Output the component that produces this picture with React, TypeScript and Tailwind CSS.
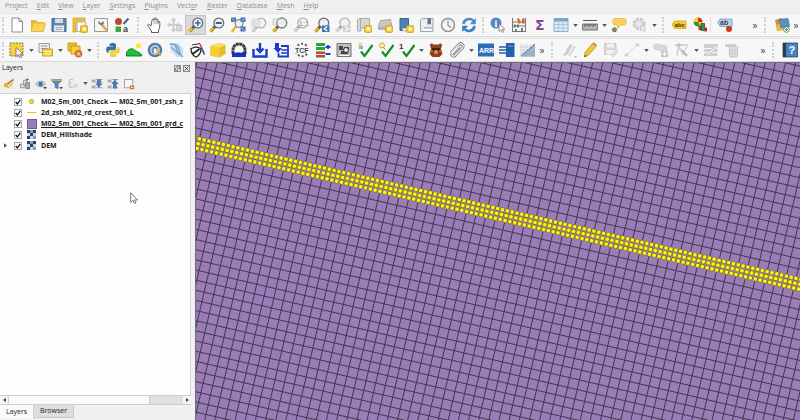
import { ReactNode } from 'react'

const Svg = ({ children, faded = false, size = 'size-4' }: { children: ReactNode; faded?: boolean; size?: string }) => (
  <svg viewBox="0 0 16 16" className={`${size} shrink-0 ${faded ? 'opacity-50 grayscale' : ''}`} fill="none" aria-hidden="true">
    {children}
  </svg>
)

const Lens = ({ children, faded = false }: { children?: ReactNode; faded?: boolean }) => (
  <Svg faded={faded}>
    <path d="M6 9.5 1.5 14.5" stroke="#5b5335" strokeWidth="3" />
    <path d="M4.5 11 1.2 14.6" stroke="#f0c419" strokeWidth="2.2" />
    <circle cx="9.8" cy="6" r="4.9" fill="#eef1f2" stroke="#6c7276" strokeWidth="1.3" />
    {children}
  </Svg>
)

const Star = () => (
  <g>
    <rect x="8.5" y="8.5" width="7.3" height="7" rx="1.5" fill="#f1cb3a" stroke="#c9981a" strokeWidth=".7" />
    <circle cx="12.2" cy="12" r="1.8" fill="#fff8d8" />
  </g>
)

const Check = () => <path d="M4 9.5 7.5 14 15.5 3" stroke="#15902a" strokeWidth="2.2" />

const icons: Record<string, ReactNode> = {
  newProject: <Svg><path d="M3 1h7l3.5 3.5V15H3z" fill="#fff" stroke="#8b8b8b" /><path d="M10 1v3.5h3.5" stroke="#8b8b8b" /></Svg>,
  open: <Svg><path d="M1 3h5l1.5 2H13v9H1z" fill="#e5b92e" /><path d="M3 6h12.5l-2 8.5H1z" fill="#f8d457" stroke="#d8aa25" strokeWidth=".7" /></Svg>,
  save: <Svg><path d="M1 1.5h14v13H1z" fill="#5d87b4" stroke="#45698f" /><path d="M4 1.5h8V6H4z" fill="#d7dde3" /><path d="M3 8.5h10v6H3z" fill="#eceef0" /><path d="M4.5 10.5h7M4.5 12.5h7" stroke="#9ba6b1" /></Svg>,
  newLayout: <Svg><path d="M1 1h12v3H4v11H1z" fill="#f4c62d" stroke="#c79a1d" strokeWidth=".7" /><path d="M5 5h8.5v9.5H5z" fill="#fff" stroke="#9c9c9c" strokeWidth=".8" /><Star /></Svg>,
  layoutManager: <Svg><path d="M1.500 1.500h13v13h-13z" fill="#f5f5f5" stroke="#9a9a9a" /><path d="m8.500 7.500 6 6.500" stroke="#d7a935" strokeWidth="2.400" /><path d="M5 4c0 2.500 1.500 4.500 4 4s2-2.500 1-4L8.500 6 7 5.500z" fill="#777" /></Svg>,
  style: (
    <Svg>
      <circle cx="4.500" cy="4.500" r="3.500" fill="#b94a2c" />
      <path d="m9.500 7 5-5.500" stroke="#42658e" strokeWidth="2" />
      <path d="M1.500 9.500h5.500V15H1.500z" fill="#47a04c" />
      <text x="9" y="15" className="fill-[#444] font-['Liberation_Sans'] text-[9px] font-bold">a</text>
    </Svg>
  ),
  hand: <Svg><path d="M5 9 3.300 7.500C2 6.500 1.200 8 2.200 9.200L5.500 14v1.500h7V13c1.200-2 1.500-4 1.300-7.500 0-1.500-1.800-1.500-1.800 0V3.200c0-1.500-1.900-1.500-1.900 0V2c0-1.600-2-1.600-2 0v1.200c0-1.500-2-1.500-2 0z" fill="#fff" stroke="#4d4d4d" strokeWidth=".9" /><path d="M8.100 3.500V7m2-3.500V7m1.900-2v2.500" stroke="#777" strokeWidth=".7" /></Svg>,
  panSelection: <Svg faded><path d="M6.500.500 9.500 4h-2v3h3V5l3.500 3-3.500 3V9h-3v3h2l-3 3.500-3-3.500h2V9h-3v2L0 8l3-3v2h2.500V4h-2z" fill="#a5a5a5" /><path d="M9.500 8.500H15V14H9.500z" fill="#bbb" stroke="#888" strokeWidth=".7" /></Svg>,
  zoomIn: <Lens><path d="M7 6h5.600M9.800 3.200v5.600" stroke="#3470ae" strokeWidth="1.700" /></Lens>,
  zoomOut: <Lens><path d="M6.800 6h6" stroke="#355f8f" strokeWidth="2" /></Lens>,
  zoomFull: (
    <Svg>
      <path d="M6 9.500 1.800 15" stroke="#e6bb20" strokeWidth="2.500" />
      <circle cx="9" cy="6.500" r="4" fill="#eef1f2" stroke="#6c7276" />
      <path d="M1 .500h5v4.500H1zM10.500.500h5v4.500h-5zM10.500 9.500h5v5h-5z" fill="#4677b1" />
      <path d="m2 1.500 3 3M14.500 1.500l-3 3m3 9-3-3" stroke="#c9daf0" strokeWidth=".8" />
    </Svg>
  ),
  zoomSelection: <Lens faded><path d="M1 2h8v8H1z" fill="#ccc" stroke="#aaa" strokeWidth=".6" /></Lens>,
  zoomLayer: <Lens><path d="M1 2h6v6H1z" fill="#e8e8e8" stroke="#b4b4b4" strokeWidth=".6" /><circle cx="9.800" cy="6" r="4.900" fill="#ededed" stroke="#6c7276" /></Lens>,
  zoomNative: <Lens faded><text x="6" y="8.500" className="fill-[#555] font-['Liberation_Sans'] text-[7px] font-bold">1:1</text></Lens>,
  zoomLast: <Lens><path d="M8 8.500h7.500v6.500H8z" fill="#3a77b7" /><path d="m13.300 9.500-3 2.200 3 2.300" stroke="#fff" strokeWidth="1.300" /></Lens>,
  zoomNext: <Lens faded><path d="M8 8.500h7.500v6.500H8z" fill="#aaa" /><path d="m10.300 9.500 3 2.200-3 2.300" stroke="#fff" strokeWidth="1.300" /></Lens>,
  mapView: <Svg><path d="M3 1.500h10.500V11H5v3H1.500V3z" fill="#d8d8d8" stroke="#aaa" /><path d="M4.500 2v9" stroke="#aaa" /><Star /></Svg>,
  view3d: <Svg><path d="m3.500 3.500 10-1 1.500 8H1z" fill="#c9c9c9" stroke="#aaa" /><path d="M1 10.500h10v2.500H1z" fill="#b7b7b7" /><Star /></Svg>,
  newBookmark: <Svg><path d="M2 1.500h8.500V11H4.500v2.500H2z" fill="#4f80b4" stroke="#3c658f" /><path d="M4.500 11h7v3h-7z" fill="#e9e9e9" stroke="#8d8d8d" strokeWidth=".6" /><Star /></Svg>,
  bookmarks: <Svg><path d="M3.500 1.500h10.500v9.500H5v3.500H1.500V3z" fill="#eceded" stroke="#a1a4a8" /><path d="M5 11h9v3.500H3" stroke="#a1a4a8" fill="#f7f7f7" /><path d="M8.500 1.500h3.500v6.500l-1.700-1.500L8.500 8z" fill="#60738a" /></Svg>,
  clock: <Svg><circle cx="8" cy="8" r="6.500" fill="#f3f3f3" stroke="#959595" strokeWidth="1.500" /><path d="M8 3.500V8.500l3 2" stroke="#888" strokeWidth="1.100" /></Svg>,
  refresh: <Svg><path d="M2.500 7c.500-5 7-6.500 10-3" stroke="#4d8dcb" strokeWidth="2.600" /><path d="M14.800 1v6.200H8.700z" fill="#4d8dcb" /><path d="M13.500 9c-.500 5-7 6.500-10 3" stroke="#3c7dbe" strokeWidth="2.600" /><path d="M1.200 15V8.800h6.100z" fill="#3c7dbe" /></Svg>,
  identify: (
    <Svg>
      <circle cx="6" cy="6" r="5.500" fill="#5387bd" />
      <text x="4.500" y="9.500" className="fill-white font-['Liberation_Serif'] text-[10px] font-bold">i</text>
      <path d="M9 7v7.500l1.900-1.700 1.500 2.700 1.200-.700-1.400-2.500h2.600z" fill="#fff" stroke="#777" strokeWidth=".8" />
    </Svg>
  ),
  abacus: <Svg><path d="M1.500 1v14M14.500 1v14M1.500 5h13M1.500 9h13M1.500 14.500h13" stroke="#777" /><path d="M7 3.500h2.500v3H7zM11 3.500h2.500v3H11zM6 1.500h2.500v2H6zM11 1.500h2.500v2H11z" fill="#d4652c" /><path d="M3 7.500h2v3H3zM6 7.500h2v3H6zM4 12h2v2H4zM10 11h2v3h-2z" fill="#777" /></Svg>,
  sum: <Svg><text x="3" y="13" className="fill-[#80459b] font-['DejaVu_Sans'] text-[14px] font-bold">Σ</text></Svg>,
  table: <Svg><path d="M1 1.500h14v13H1z" fill="#dfeaf5" stroke="#8fb0d0" /><path d="M1 1.500h14v3H1z" fill="#6f9fcf" /><path d="M5.500 2v12M10 2v12M1 7.500h14M1 11h14" stroke="#9cbcd9" strokeWidth=".8" /></Svg>,
  ruler: <Svg><path d="M1 3.500h14" stroke="#555" /><path d="M.500 7h15v6H.500z" fill="#b5b5b5" stroke="#777" /><path d="M3 7v3m2-3v2m2-2v3m2-3v2m2-2v3m2-3v2" stroke="#444" strokeWidth=".8" /></Svg>,
  tip: <Svg><path d="M4 1.500h9c1.500 0 2 1 2 2V6c0 1.500-1 2-2 2H9.500l-3 3.500L6.700 8H4C2.500 8 2 7 2 6V3.500c0-1.500 1-2 2-2z" fill="#fbd760" stroke="#dfb236" strokeWidth=".8" /><path d="M4 4h9M4 6h7" stroke="#e4bc46" strokeWidth=".7" strokeDasharray="2 1" /><circle cx="3.500" cy="12.800" r="2" fill="#7e9377" stroke="#66725f" /></Svg>,
  gear: <Svg faded><circle cx="7" cy="7" r="5" stroke="#9d9d9d" strokeWidth="3" strokeDasharray="3 1" /><circle cx="7" cy="7" r="3.500" fill="#ddd" stroke="#aaa" /><path d="M9 8v6l1.700-1.500 1.800 2.500 1-1-1.500-2H14z" fill="#eee" stroke="#888" strokeWidth=".7" /></Svg>,
  label: (
    <Svg>
      <path d="M1 7.500 3.500 4H15v7.500H3.500z" fill="#f7cb2d" stroke="#cfa01b" strokeWidth=".7" />
      <text x="3.500" y="10" className="fill-[#3b3410] font-['Liberation_Sans'] text-[6px] font-bold">abc</text>
    </Svg>
  ),
  diagram: <Svg><circle cx="6" cy="5" r="4.500" fill="#f5cf2e" /><path d="M1.500 5A4.500 4.500 0 0 0 8 9L6 5z" fill="#23993a" /><path d="M6 .500A4.500 4.500 0 0 1 10.500 5H6z" fill="#cf3426" /><path d="M6.500 9H10v4H6.500z" fill="#cf3426" /><path d="M9 6.500h3.500v7H9z" fill="#2b9b3e" stroke="#1d1d1d" strokeWidth=".6" /><path d="M12.500 10.500h2.500v4h-2.500z" fill="#c2271d" /></Svg>,
  pinLabel: (
    <Svg>
      <path d="M1 5.500 3 2h12v7.500H3z" fill="#b8d2ee" stroke="#6c9bcb" strokeWidth=".8" />
      <text x="3" y="8.300" className="fill-[#444] font-['Liberation_Sans'] text-[7px] font-bold">ab</text>
      <circle cx="12" cy="12" r="3" fill="#c5391f" />
    </Svg>
  ),
  dataSource: <Svg><path d="m1 3 7-2 3 9-8 2z" fill="#d98a32" /><path d="m2 8 7-3 3 8-9 1z" fill="#e0bd37" /><path d="m5 2.500 9-1 1.500 8-8.500 1z" fill="#5b8ecb" stroke="#456f9f" strokeWidth=".7" /><circle cx="12.500" cy="12.500" r="2.800" fill="#fff" stroke="#4a9566" /><path d="M12.500 11v3M11 12.500h3" stroke="#4a9566" /></Svg>,

  select: <Svg><path d="M1 1h13v13H1z" fill="#f7d23a" stroke="#777" strokeDasharray="2 1" /><path d="M7 5.500v9l2.300-2 1.800 3.500 1.500-.800-1.700-3.200 3.100-.300z" fill="#fff" stroke="#777" strokeWidth=".9" /></Svg>,
  form: <Svg><path d="M1 1.500h10.500v9H1z" fill="#eee" stroke="#999" /><path d="M3 4h6.500M3 6.500h6.500" stroke="#999" /><path d="M4.500 7h10v7h-10z" fill="#f7d23a" stroke="#b7962b" strokeWidth=".8" /><path d="M6.500 9.500h6.500M6.500 12h6.500" stroke="#fff6cb" /></Svg>,
  deselect: <Svg><path d="M1 1h8.500v8H1z" fill="#f3bf26" stroke="#b98c20" strokeWidth=".8" /><path d="M4 4h9v8H4z" fill="#f7d23a" stroke="#b98c20" strokeWidth=".8" /><circle cx="11.500" cy="11.800" r="3.800" fill="#ce6b33" /><path d="m9.800 10.200 3.400 3.400m0-3.400-3.400 3.400" stroke="#fff" /></Svg>,
  python: <Svg><path d="M4.500 4V2.500C4.500.500 11 .500 11 2.500V6c0 2-1 2-2.500 2H5.500C4 8 3.500 9 3.500 11 .500 11 .500 4.500 3 4.500h5V4z" fill="#3974a8" /><path d="M11.500 12v1.500c0 2-6.500 2-6.500 0V10c0-2 1-2 2.500-2h3C12 8 12.500 7 12.500 5c3 0 3 6.500.500 6.500H8V12z" fill="#f4cd3d" /></Svg>,
  tuflow: <Svg><path d="M.500 14V10.500C2 7 6 5.500 8.500 8c2 2 4.500 1.500 7 4.500V14z" fill="#16c52f" stroke="#145d20" strokeWidth=".8" /><path d="m12.500 0 .700 2.200L15.500 2l-1.200 2 1.200 2-2.300-.500-.700 1.500-.700-1.500-2.300.500 1.200-2-1.200-2 2.300.200z" fill="#ffe21f" /></Svg>,
  swirl: <Svg><circle cx="8" cy="8" r="6" stroke="#547da5" strokeWidth="2.600" /><circle cx="8" cy="8" r="3.500" stroke="#8eb0cc" /><path d="M6 11V7c0-2 4-2 4 0" stroke="#547da5" strokeWidth="1.500" /><path d="m9 7 5 7" stroke="#e3ad2f" strokeWidth="1.700" /></Svg>,
  crayfish: <Svg><path d="M1 1h9l5 5v9h-6L3 9z" fill="#cbdff1" /><path d="M2 2c4 0 8 1 9 5s0 6 4 8M3 5l9 8M7 3l4 10" stroke="#77a5cf" strokeWidth="1.300" /></Svg>,
  shield: <Svg><path d="M2 6.500 7 5l5 1.500c0 4-1.500 7-5 8.500-3.500-1.500-5-4.500-5-8.500z" fill="#fff" stroke="#222" strokeWidth="1.300" /><path d="m3.500 12 7-5" stroke="#222" strokeWidth="1.800" /><path d="m3 3 8-1.500" stroke="#333" /><path d="m11 2 4 9" stroke="#c24032" strokeWidth="1.500" /><path d="m12.500 6 3 7" stroke="#2c67a3" strokeWidth="1.300" /></Svg>,
  box: <Svg><path d="m.500 4 9-3 6 2v9l-6 3.500-9-2z" fill="#e8bd23" /><path d="m.500 4 9 1.700V15.500l-9-2z" fill="#f5cd37" /><path d="m.500 4 9-3 6 2-6 2.700z" fill="#f9dd68" /></Svg>,
  arch: <Svg><path d="M2 12V8c0-8 12-8 12 0v4" stroke="#3d4042" strokeWidth="3" strokeDasharray="3 .400" /><path d="M1 10.500c2-1 3 1 5 0s3 1 5 0 3 0 4 0V15H1z" fill="#1531bd" /></Svg>,
  download: <Svg><path d="M1.500 7v7.500h13V7" stroke="#1b3bcb" strokeWidth="2.400" /><path d="M8 1v8M4.500 6.500 8 10l3.500-3.500" stroke="#1b3bcb" strokeWidth="2.400" /></Svg>,
  importTo: <Svg><path d="M2 1h4v5h3L5 11 .500 6H2z" fill="#1b3bcb" /><path d="M8 4h7v10.500H5.500V11" stroke="#1b3bcb" strokeWidth="1.800" /><path d="M8.500 8h6M8 11h6" stroke="#1b3bcb" strokeWidth="1.500" /></Svg>,
  tcf: (
    <Svg>
      <circle cx="8" cy="8" r="6.300" stroke="#555e68" strokeWidth="2" strokeDasharray="2 2" />
      <path d="M0 5h16v6H0z" fill="#f6f6f6" />
      <text x="1" y="10.500" className="fill-[#3c4652] font-['Liberation_Sans'] text-[7px] font-bold">TCF</text>
    </Svg>
  ),
  bars: <Svg><path d="M1 1h9v3H1zM1 5h9v3H1z" fill="#27a53d" /><path d="M1 9.500h9v2.500H1zM1 13h9v2.500H1z" fill="#b54b35" /><path d="M10.500 5h5m-2.500-2v4M10.500 12h5" stroke="#263fc4" strokeWidth="1.800" /></Svg>,
  machine: <Svg><path d="M1 1.500h14v13H1z" fill="#bdbdbd" stroke="#777" /><path d="M3 4h4v4H3zM8 5h5v2H8zM5 9h7v3H5z" fill="#444" /><circle cx="10" cy="8" r="2.500" fill="#e6e6e6" stroke="#333" /><path d="M3 13.500h10" stroke="#fff" /></Svg>,
  checkPage: <Svg><path d="M1.500 1H5v4.500H1.500z" fill="#f3d36a" /><path d="M2 4h4v3H2z" fill="#87aede" /><Check /></Svg>,
  checkLens: <Svg><circle cx="4" cy="3.500" r="2.500" fill="#fbeebb" stroke="#d1a42c" /><path d="m5.500 5.500 2 2" stroke="#8b8b8b" /><Check /></Svg>,
  checkOne: (
    <Svg>
      <text x="0" y="6.500" className="fill-[#333] font-['Liberation_Sans'] text-[8px] font-bold">1</text>
      <Check />
    </Svg>
  ),
  bear: <Svg><path d="M2 3c0-2 3-2 3-.500h6C11 1 14 1 14 3l-1 4 1.500 5-3 3h-7l-3-3L3 7z" fill="#8c4420" /><path d="M4 6h8v3H4z" fill="#42200f" /><circle cx="8" cy="10" r="2" fill="#dd9a55" /><path d="M2 9h3M11 9h3" stroke="#cf6e2f" strokeWidth="1.500" /></Svg>,
  clip: <Svg><path d="m2 11 8-8.500c2-2 5.500.500 3.500 3L6 13.500c-2 1.500-4-.500-3-2L10 5" stroke="#7c7c7c" strokeWidth="3" /><path d="m2 11 8-8.500c2-2 5.500.500 3.500 3L6 13.500c-2 1.500-4-.500-3-2L10 5" stroke="#efefef" strokeWidth="1.300" /></Svg>,
  arr: (
    <Svg>
      <path d="M0 1.500h16v13H0z" fill="#2c6db9" />
      <text x="1" y="11" className="fill-white font-['Liberation_Sans'] text-[7px] font-bold">ARR</text>
    </Svg>
  ),
  flow: <Svg><path d="M7 1h8.500v14H7z" fill="#255fae" /><path d="M0 5h8M0 8h8M0 11h8" stroke="#255fae" strokeWidth="1.600" /><path d="M9 4h5" stroke="#7ca8de" /></Svg>,
  chart: <Svg><path d="M1 1.500h14v13H1z" fill="#f4f7fa" /><path d="M1 14.500 15 2v12.500z" fill="#93afcb" /><path d="M1 1.500v13h14M4 2v12m3-12v12m3-12v12m3-12v12M1 5h14M1 8h14M1 11h14" stroke="#aebccb" strokeWidth=".6" /><path d="M1 14 15 2" stroke="#51718f" /></Svg>,

  edits: <Svg faded><path d="m3 12 6-10 3 1-6 10-4 1z" fill="#a4a4a4" /><path d="m7 13 6-9 2 1-6 9z" fill="#b8b8b8" /><path d="M13 14h3l-1.500 2z" fill="#777" /></Svg>,
  pencil: <Svg><path d="m3 10.500 7.500-9 3.500 3L6.500 13 2.500 15z" fill="#f4c630" stroke="#b48b1f" strokeWidth=".8" /><path d="m10.500 1.500 1.500-1 3 2.500-1 1.500z" fill="#db7e5c" /><path d="m2.500 15 .500-2 1.500 1z" fill="#333" /></Svg>,
  saveEdits: <Svg faded><path d="M1.500 1.500h11.500v11H1.500z" fill="#bbb" stroke="#999" /><path d="M4 1.500h7v4H4zM3.500 8h8v4.500h-8z" fill="#eee" /><path d="m8 13 5-6 2 2-5 6z" fill="#ccc" stroke="#999" strokeWidth=".6" /></Svg>,
  line: <Svg faded><path d="M2.500 13 13 3" stroke="#bbb" /><circle cx="2.500" cy="13" r="1.800" fill="#aaa" /><circle cx="13.500" cy="3" r="1.800" fill="#aaa" /></Svg>,
  addPolygon: <Svg faded><path d="M1 5c0-4 5-3 6-2s8-1 7 3-5 3-7 2-6 1-6-3z" fill="#bbb" stroke="#999" /><path d="M8 8.500h7V15H8z" fill="#999" /><path d="M11.500 9.500v4.500M9.200 11.800h4.600" stroke="#fff" strokeWidth="1.200" /></Svg>,
  vertex: <Svg faded><path d="M1 3h13M5 3 3 14M3 4l10 9M13 5l-5 8" stroke="#999" strokeWidth="1.300" /><path d="M3.500 1.500h3v3h-3z" fill="#888" /><path d="m7 8 6 6" stroke="#777" strokeWidth="2" /></Svg>,
  multiEdit: <Svg faded><path d="M1 2h13.500v4H1zM1 7h13.500v3H1zM1 11h13.500v3H1z" fill="#a9a9a9" /><path d="m3 13 10-10 2 1.500L5 14z" fill="#ddd" stroke="#888" strokeWidth=".7" /></Svg>,
  trash: <Svg faded><path d="M1 2h11v3H1z" fill="#aaa" /><path d="M4 5h11M5 7h9l-1 8H6z" fill="#c5c5c5" stroke="#8e8e8e" /><path d="M8 8.500V13m3-4.500V13" stroke="#8e8e8e" /></Svg>,
  help: (
    <Svg>
      <path d="M1 1h14.500v14H1z" fill="#4783c4" stroke="#2d4867" strokeWidth=".8" />
      <path d="M1 1h3v14H1z" fill="#2b3b4e" />
      <text x="6.500" y="12" className="fill-white font-['Liberation_Sans'] text-[11px] font-bold">?</text>
    </Svg>
  ),
}

const Grip = ({ className }: { className: string }) => (
  <div className={`flex shrink-0 justify-center ${className}`}>
    <div className="h-4 border-l-2 border-dotted border-[#d2d2d2]" />
  </div>
)

const Tool = ({ name, active = false }: { name: string; active?: boolean }) => (
  <button
    aria-label={name}
    className={`flex h-5 w-[21px] shrink-0 items-center justify-center ${active ? 'border border-[#c2c2c2] bg-[#d9d9d9]' : ''}`}
  >
    {icons[name]}
  </button>
)

const Tools = ({ names }: { names: string[] }) => (
  <>
    {names.map((name) => (
      <Tool key={name} name={name} active={name === 'zoomIn'} />
    ))}
  </>
)

const Arrow = () => (
  <button aria-label="More options" className="flex h-5 w-2 shrink-0 items-center justify-center">
    <svg viewBox="0 0 6 4" className="h-[3px] w-[5px]"><path d="M0 0h6L3 4z" fill="#555" /></svg>
  </button>
)

const More = () => (
  <button aria-label="Show more" className="flex h-5 w-2 shrink-0 items-center justify-center text-[10px] text-[#444]">»</button>
)

const menus = [
  ['Pro', 'j', 'ect'],
  ['', 'E', 'dit'],
  ['', 'V', 'iew'],
  ['', 'L', 'ayer'],
  ['', 'S', 'ettings'],
  ['', 'P', 'lugins'],
  ['Vect', 'o', 'r'],
  ['', 'R', 'aster'],
  ['', 'D', 'atabase'],
  ['', 'M', 'esh'],
  ['', 'H', 'elp'],
]

const Raster = () => (
  <svg viewBox="0 0 9 9" className="size-[9px]">
    <path d="M0 0h9v9H0z" fill="#c6d5e6" />
    <path d="M0 0h3v3H0zM6 0h3v3H6zM3 3h3v3H3zM0 6h3v3H0z" fill="#2e4262" />
    <path d="M3 0h3v3H3zM6 6h3v3H6z" fill="#7f9cc0" />
  </svg>
)

const layers = [
  { name: 'M02_5m_001_Check — M02_5m_001_zsh_z', symbol: <div className="size-[5px] rounded-full border border-[#b5a22c] bg-[#ffe619]" /> },
  { name: '2d_zsh_M02_rd_crest_001_L', symbol: <div className="h-px w-[9px] bg-[#eab92f]" /> },
  { name: 'M02_5m_001_Check — M02_5m_001_grd_c', symbol: <div className="size-[10px] border border-[#77598f] bg-[#987db7]" />, current: true },
  { name: 'DEM_Hillshade', symbol: <Raster /> },
  { name: 'DEM', symbol: <Raster />, expandable: true },
]

const panelIcons: Record<string, ReactNode> = {
  styling: <Svg size="size-3"><path d="M2 7c3-1 5 0 5 2s-3 5-6 2z" fill="#e6a432" /><path d="m6 8 8-6" stroke="#cf7a35" strokeWidth="2.500" /><path d="m2 8 5 5 6-6" stroke="#efb13b" strokeWidth="2" /></Svg>,
  group: <Svg size="size-3"><path d="M2 13V8h5v5zM6 9V3h4v6z" fill="#ddd" stroke="#888" /><path d="M9 6h5v8H9z" fill="#aaa" stroke="#777" /><path d="M11 0v4M9 2h4" stroke="#555" /></Svg>,
  themes: <Svg size="size-3"><path d="M1 8c3-5 10-5 13 0-3 5-10 5-13 0z" fill="#d5d9dd" stroke="#818a94" /><circle cx="7.500" cy="8" r="3" fill="#48749f" /><path d="M11 12h5l-2.500 3z" fill="#444" /></Svg>,
  filter: <Svg size="size-3"><path d="M1 2h13v2L9.500 8v6l-4-1V8L1 4z" fill="#4f8bc4" stroke="#3a6a99" strokeWidth=".8" /><path d="M1 2h13v2H1z" fill="#e0b13b" /><path d="M11 12h5l-2.500 3z" fill="#444" /></Svg>,
  expression: <Svg size="size-3" faded><path d="M8 2C1 1 2 7 6 7 0 7 1 14 8 12" stroke="#999" strokeWidth="1.800" /><path d="M9 8h5v5H9z" fill="#bbb" /></Svg>,
  expand: <Svg size="size-3"><path d="M1 2h5v4H1zM1 10h5v4H1z" fill="#aaa" /><path d="M7 2h8M7 5h8M7 13h8" stroke="#999" strokeWidth="1.500" /><path d="M8 2h5v5h2.500l-5 6-5-6H8z" fill="#4c7eb3" /></Svg>,
  collapse: <Svg size="size-3"><path d="M1 2h5v4H1zM1 10h5v4H1z" fill="#aaa" /><path d="M7 2h8M7 13h8" stroke="#999" strokeWidth="1.500" /><path d="M8 14h5V8h2.500l-5-6-5 6H8z" fill="#4c7eb3" /></Svg>,
  remove: <Svg size="size-3"><path d="M2 2h11v11H2z" fill="#f6f6f6" stroke="#888" /><path d="M9 10h6v5H9z" fill="#dc6c50" /><path d="M10.500 12.500h3" stroke="#fff" strokeWidth="1.200" /></Svg>,
}

const PanelTool = ({ name }: { name: string }) => (
  <button aria-label={name} className="flex h-4 w-4 items-center justify-center">{panelIcons[name]}</button>
)

const LayersPanel = () => (
  <aside className="flex w-[195px] shrink-0 flex-col pr-1">
    <div className="flex h-3 items-center justify-between pl-[2px] pr-px pt-px">
      <h2 className="text-[7px] text-[#222]">Layers</h2>
      <div className="flex gap-[2px]">
        <button aria-label="Float panel" className="size-[7px] border border-[#8a8a8a]">
          <svg viewBox="0 0 5 5" className="size-[5px]"><path d="M2 .500h2.500V3H2zM.500 2v2.500H3" stroke="#555" strokeWidth=".7" fill="none" /></svg>
        </button>
        <button aria-label="Close panel" className="size-[7px] border border-[#8a8a8a]">
          <svg viewBox="0 0 5 5" className="size-[5px]"><path d="m.500.500 4 4m0-4-4 4" stroke="#333" strokeWidth=".9" /></svg>
        </button>
      </div>
    </div>
    <div className="flex h-[19px] items-center pl-px">
      {['styling', 'group', 'themes', 'filter', 'expression'].map((name) => <PanelTool key={name} name={name} />)}
      <Arrow />
      {['expand', 'collapse', 'remove'].map((name) => <PanelTool key={name} name={name} />)}
    </div>
    <ul className="min-h-0 flex-1 overflow-hidden border-r border-t border-[#d0d0d0] bg-[#fdfdfd] pt-[2px]">
      {layers.map(({ name, symbol, current, expandable }) => (
        <li key={name} className="flex h-[11px] items-center">
          <div className="flex w-[14px] shrink-0 pl-1">
            {expandable && (
              <button aria-label={`Expand ${name}`}>
                <svg viewBox="0 0 4 6" className="h-[5px] w-[3px]"><path d="M0 0 4 3 0 6z" fill="#555" /></svg>
              </button>
            )}
          </div>
          <label className="flex items-center whitespace-nowrap text-[7px] font-bold leading-[10px] text-[#1a1a1a]">
            <span className="grid size-2 shrink-0">
              <input type="checkbox" defaultChecked className="peer col-start-1 row-start-1 size-2 appearance-none border border-[#a8a8a8] bg-white" />
              <svg viewBox="0 0 8 8" className="pointer-events-none invisible col-start-1 row-start-1 size-2 peer-checked:visible">
                <path d="M1.700 4 3.400 6 6.300 1.800" stroke="#111" strokeWidth="1.300" fill="none" />
              </svg>
            </span>
            <span className="flex w-[19px] shrink-0 justify-center">{symbol}</span>
            <span className={current ? 'underline' : ''}>{name}</span>
          </label>
        </li>
      ))}
    </ul>
    <div className="flex h-[10px] shrink-0 border-y border-[#cfcfcf] bg-[#dbe1e6]">
      <button aria-label="Scroll left" className="flex w-2 items-center justify-center bg-[#f6f6f6]">
        <svg viewBox="0 0 3 4" className="h-1 w-[3px]"><path d="M3 0v4L0 2z" fill="#444" /></svg>
      </button>
      <div className="w-[142px] border-x border-[#cfcfcf] bg-[#fafafa]" />
      <div className="flex-1" />
      <button aria-label="Scroll right" className="flex w-2 items-center justify-center bg-[#f6f6f6]">
        <svg viewBox="0 0 3 4" className="h-1 w-[3px]"><path d="M0 0v4L3 2z" fill="#444" /></svg>
      </button>
    </div>
    <div role="tablist" className="flex h-[15px] shrink-0 items-start text-[7px] text-[#222]">
      <button role="tab" aria-selected="true" className="h-[14px] w-[34px] border-r border-[#cfcfcf] bg-[#fafafa]">Layers</button>
      <button role="tab" aria-selected="false" className="h-[13px] w-10 border-b border-r border-[#cbcbcb] bg-[#dedede]">Browser</button>
    </div>
  </aside>
)

// The model grid is rotated: one cell along a row moves by (CELL_X, CELL_Y).
const CELL_X = 9.623
const CELL_Y = 2.25
const ORIGIN = { x: 3, y: 207.7 }
const SLOPE = CELL_Y / CELL_X
const SPACING = CELL_X + CELL_Y * SLOPE
const EXTENT = 2400

const gridPath = () => {
  const parts: string[] = []
  for (let n = 0; n < 320; n++) {
    const y = ORIGIN.y + (n - 80) * SPACING - ORIGIN.x * SLOPE
    parts.push(`M0 ${y.toFixed(2)}L${EXTENT} ${(y + EXTENT * SLOPE).toFixed(2)}`)
    const x = ORIGIN.x + (n - 5) * SPACING + ORIGIN.y * SLOPE
    parts.push(`M${x.toFixed(2)} 0L${(x - EXTENT * SLOPE).toFixed(2)} ${EXTENT}`)
  }
  return parts.join('')
}

// Z points sit on every half cell. The crest runs along the middle one of three rows.
const CREST_ROW = -25

const pointAt = (i: number, j: number) => ({
  x: ORIGIN.x + (i * CELL_X - j * CELL_Y) / 2,
  y: ORIGIN.y + (i * CELL_Y + j * CELL_X) / 2,
})

const zPoints = [CREST_ROW - 1, CREST_ROW, CREST_ROW + 1].flatMap((row) =>
  Array.from({ length: 500 }, (_, i) => pointAt(i - 10, row)),
)

const crestStart = pointAt(-10, CREST_ROW)
const crestEnd = pointAt(490, CREST_ROW)

const MapCanvas = () => (
  <main className="min-w-0 flex-1 overflow-hidden border-l border-t border-[#77677f] bg-[#987db7]">
    <svg className="h-full w-full" role="img" aria-label="Model grid with crest line points">
      <path d={gridPath()} stroke="#45364f" strokeWidth="1" fill="none" />
      <path d={`M${crestStart.x} ${crestStart.y}L${crestEnd.x} ${crestEnd.y}`} stroke="#c98a1c" strokeWidth="1.500" />
      {zPoints.map(({ x, y }) => (
        <circle key={`${x}-${y}`} cx={x} cy={y} r="2.200" fill="#fff714" stroke="#5d5018" strokeWidth=".5" />
      ))}
    </svg>
  </main>
)

const App = () => (
  <div className="relative flex h-screen flex-col overflow-hidden bg-[#f0f0f0] font-['Open_Sans','Noto_Sans',sans-serif]">
    <nav className="flex h-[13px] shrink-0 items-center gap-[9px] pl-[5px] text-[7px] text-[#8e8e8e]">
      {menus.map(([before, key, after]) => (
        <button key={before + key + after}>{before}<u>{key}</u>{after}</button>
      ))}
    </nav>

    <div role="toolbar" className="flex h-6 shrink-0 items-center border-y border-[#dadada] border-t-[#e6e6e6] bg-[#f7f7f7]">
      <Grip className="w-[6px]" />
      <Tools names={['newProject', 'open', 'save', 'newLayout', 'layoutManager', 'style']} />
      <Grip className="w-[11px]" />
      <Tools names={['hand', 'panSelection', 'zoomIn', 'zoomOut', 'zoomFull', 'zoomSelection', 'zoomLayer', 'zoomNative', 'zoomLast', 'zoomNext', 'mapView', 'view3d', 'newBookmark', 'bookmarks', 'clock', 'refresh']} />
      <Grip className="w-2" />
      <Tools names={['identify', 'abacus', 'sum', 'table']} />
      <Arrow />
      <Tool name="ruler" />
      <Arrow />
      <Tools names={['tip', 'gear']} />
      <Arrow />
      <Grip className="w-[10px]" />
      <Tools names={['label', 'diagram']} />
      <div className="h-4 w-1 border-l border-[#dcdcdc]" />
      <Tool name="pinLabel" />
      <div className="flex-1" />
      <More />
      <Grip className="w-3" />
      <Tool name="dataSource" />
      <More />
    </div>

    <div role="toolbar" className="mt-px flex h-6 shrink-0 items-center border-y border-[#dadada] border-t-[#e6e6e6] bg-[#f7f7f7]">
      <Grip className="w-[6px]" />
      <Tool name="select" />
      <Arrow />
      <Tool name="form" />
      <Arrow />
      <Tool name="deselect" />
      <Arrow />
      <Grip className="w-[9px]" />
      <Tools names={['python', 'tuflow', 'swirl', 'crayfish', 'shield', 'box', 'arch', 'download', 'importTo', 'tcf', 'bars', 'machine', 'checkPage', 'checkLens', 'checkOne']} />
      <Arrow />
      <Tools names={['bear', 'clip']} />
      <Arrow />
      <Tools names={['arr', 'flow', 'chart']} />
      <More />
      <Grip className="w-3" />
      <Tools names={['edits', 'pencil', 'saveEdits', 'line']} />
      <Arrow />
      <Tools names={['addPolygon', 'vertex']} />
      <Arrow />
      <Tools names={['multiEdit', 'trash']} />
      <div className="flex-1" />
      <More />
      <Grip className="w-3" />
      <Tool name="help" />
    </div>

    <div className="flex min-h-0 flex-1">
      <LayersPanel />
      <MapCanvas />
    </div>

    <svg viewBox="0 0 8 12" className="pointer-events-none absolute left-[130px] top-[192px] h-3 w-2" aria-hidden="true">
      <path d="M.700.700v9.600l2.200-2L4.500 11.500 6 10.800 4.500 8h3z" fill="#fff" stroke="#555" strokeWidth=".8" />
    </svg>
  </div>
)

export default App
